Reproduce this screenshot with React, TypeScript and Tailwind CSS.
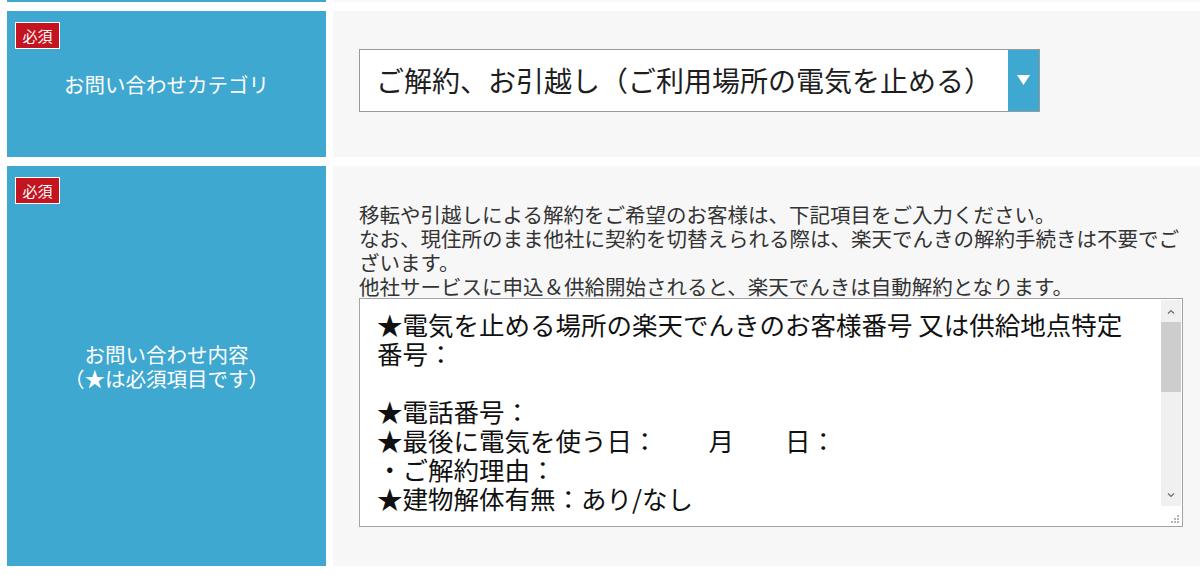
import React from 'react';

const font = "font-['Noto_Sans_CJK_JP','Noto_Sans',sans-serif]";

const RequiredBadge = () => (
  <span className="absolute left-[8px] top-[11px] flex h-[27px] w-[45px] items-center justify-center border border-white bg-[#c3141f] text-[15px] leading-none text-white">
    必須
  </span>
);

const Chevron = ({ up }: { up?: boolean }) => (
  <svg width="8" height="5" viewBox="0 0 8 5" className="text-[#6b6b6b]">
    <path d={up ? 'M1 4.5 L4 1.5 L7 4.5' : 'M1 0.5 L4 3.5 L7 0.5'} fill="none" stroke="currentColor" strokeWidth="1.2" />
  </svg>
);

const inquiryLines = [
  '★電気を止める場所の楽天でんきのお客様番号 又は供給地点特定番号：',
  '',
  '★電話番号：',
  '★最後に電気を使う日：　　月　　日：',
  '・ご解約理由：',
  '★建物解体有無：あり/なし',
  '★建物解体日：　　月　　日：',
];

const App = () => {
  return (
    <div className={`h-[575px] w-[1200px] overflow-hidden bg-white ${font}`}>
      {/* previous row (cut off) */}
      <div className="flex h-[2px] gap-[7px] pl-[7px]">
        <div className="w-[319px] bg-[#3ea8d1]" />
        <div className="flex-1 bg-[#f7f7f7]" />
      </div>

      {/* category */}
      <div className="mt-[9px] flex h-[146px] gap-[7px] pl-[7px]">
        <div className="relative flex w-[319px] items-center justify-center bg-[#3ea8d1]">
          <RequiredBadge />
          <span className="text-[20.5px] leading-[24px] text-white">お問い合わせカテゴリ</span>
        </div>
        <div className="flex flex-1 items-center bg-[#f7f7f7] pl-[26px] pb-[8px]">
          <div className="flex h-[63px] w-[681px] border border-[#9a9a9a] bg-white">
            <div className="flex flex-1 items-center pl-[16px] text-[28px] text-[#1e1e1e]">
              ご解約、お引越し（ご利用場所の電気を止める）
            </div>
            <div className="flex w-[31px] items-center justify-center bg-[#3ea8d1]">
              <svg width="13" height="10" viewBox="0 0 13 10">
                <path d="M0 0 H13 L6.5 10 Z" fill="white" />
              </svg>
            </div>
          </div>
        </div>
      </div>

      {/* inquiry content */}
      <div className="mt-[9px] flex h-[400px] gap-[7px] pl-[7px]">
        <div className="relative flex w-[319px] items-center justify-center bg-[#3ea8d1]">
          <RequiredBadge />
          <p className="text-center text-[20.5px] leading-[24px] text-white">
            お問い合わせ内容
            <br />
            （★は必須項目です）
          </p>
        </div>
        <div className="flex-1 bg-[#f7f7f7] pl-[26px] pt-[36px]">
          <p className="w-[830px] text-[20.5px] leading-[24px] text-[#333]">
            移転や引越しによる解約をご希望のお客様は、下記項目をご入力ください。
            <br />
            なお、現住所のまま他社に契約を切替えられる際は、楽天でんきの解約手続きは不要でございます。
            <br />
            他社サービスに申込＆供給開始されると、楽天でんきは自動解約となります。
          </p>
          <div className="flex h-[229px] w-[824px] border border-[#a3a3a3] bg-white">
            <div className="h-[217px] flex-1 overflow-hidden pl-[17px] pt-[10px]">
              <div className="w-[765px] whitespace-pre-wrap text-[25.5px] leading-[29px] text-[#111]">
                {inquiryLines.map((line, i) => (
                  <div key={i} className="min-h-[29px]">
                    {line}
                  </div>
                ))}
              </div>
            </div>
            <div className="mr-[1px] mt-[1px] flex w-[20px] flex-col">
              <div className="flex h-[206px] flex-col bg-[#f0f0f0]">
                <div className="flex h-[22px] items-center justify-center">
                  <Chevron up />
                </div>
                <div className="h-[70px] bg-[#cdcdcd]" />
                <div className="flex-1" />
                <div className="flex h-[22px] items-center justify-center">
                  <Chevron />
                </div>
              </div>
              <div className="flex flex-1 items-end justify-end pb-[3px] pr-[2px]">
                <svg width="9" height="9" viewBox="0 0 9 9" fill="#b5b5b5">
                  <rect x="7" y="1" width="2" height="2" />
                  <rect x="4" y="4" width="2" height="2" />
                  <rect x="7" y="4" width="2" height="2" />
                  <rect x="1" y="7" width="2" height="2" />
                  <rect x="4" y="7" width="2" height="2" />
                  <rect x="7" y="7" width="2" height="2" />
                </svg>
              </div>
            </div>
          </div>
        </div>
      </div>
    </div>
  );
};

export default App;
